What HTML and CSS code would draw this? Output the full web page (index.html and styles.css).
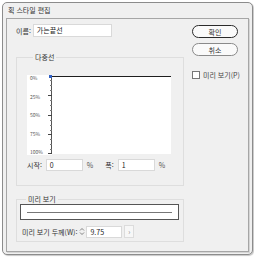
FILE: index.html
```html
<!DOCTYPE html>
<html lang="ko">
<head>
    <meta charset="utf-8">
    <title>획 스타일 편집</title>
    <link rel="stylesheet" href="styles.css">
</head>
<body>
    <div class="window">
        <div class="titlebar">획 스타일 편집</div>
        <div class="frame">
            <div class="main">
                <div class="name-row">
                    <span class="label">이름:</span>
                    <div class="field name-field">가는끝선</div>
                </div>

                <fieldset class="group lines">
                    <legend>다중선</legend>
                    <div class="chart">
                        <div class="scale">
                            <span>0%</span>
                            <span>25%</span>
                            <span>50%</span>
                            <span>75%</span>
                            <span>100%</span>
                        </div>
                        <svg class="ticks" width="5" height="80" viewBox="0 0 5 80">
                            <path d="M4.5 1V79" stroke="#555" stroke-width="1"/>
                            <path d="M1 20.5H5M1 40.5H5M1 59.5H5M1 78.5H5" stroke="#444" stroke-width="1"/>
                            <path d="M3 5.5H5M3 10.5H5M3 15.5H5M3 25.5H5M3 30.5H5M3 35.5H5M3 45.5H5M3 50.5H5M3 55.5H5M3 64.5H5M3 69.5H5M3 74.5H5" stroke="#777" stroke-width="1"/>
                            <rect x="2" y="0" width="3" height="3" fill="#2f5fc4"/>
                        </svg>
                        <div class="plot"></div>
                    </div>
                    <div class="range-row">
                        <span class="label">시작:</span>
                        <div class="field small-field">0</div>
                        <span class="unit">%</span>
                        <span class="label width-label">폭:</span>
                        <div class="field small-field">1</div>
                        <span class="unit">%</span>
                    </div>
                </fieldset>

                <fieldset class="group preview">
                    <legend>미리 보기</legend>
                    <div class="preview-box"><div class="preview-line"></div></div>
                    <div class="weight-row">
                        <span class="label">미리 보기 두께(W):</span>
                        <svg class="spin" width="6" height="9" viewBox="0 0 6 9">
                            <path d="M1 3.5L3 1.5L5 3.5M1 5.5L3 7.5L5 5.5" fill="none" stroke="#666" stroke-width="0.8"/>
                        </svg>
                        <div class="field weight-field">9.75</div>
                        <div class="step">›</div>
                    </div>
                </fieldset>
            </div>

            <div class="side">
                <button class="btn primary">확인</button>
                <button class="btn">취소</button>
                <label class="check"><span class="box"></span>미리 보기(P)</label>
            </div>
        </div>
    </div>
</body>
</html>
```

FILE: styles.css
```css
body {
    margin: 0;
    background: #ffffff;
    font-family: "Noto Sans CJK KR", "Noto Sans", sans-serif;
    font-size: 7px;
    color: #222;
}

.window {
    margin: 2px 1px 2px 2px;
    width: 251px;
    height: 253px;
    box-sizing: border-box;
    border: 1px solid #8c8c8c;
    border-radius: 5px;
    background: #f0f0f0;
    box-shadow: 1px 1px 1px #c8c8c8;
    display: flex;
    flex-direction: column;
}

.titlebar {
    height: 15px;
    line-height: 14px;
    padding-left: 5px;
    color: #333;
}

.frame {
    flex: 1;
    margin: 0 3px 2px 3px;
    border: 1px solid #a6a6a6;
    box-shadow: 1px 1px 0 #d6d6d6;
    display: flex;
}

.main {
    width: 168px;
    padding-left: 9px;
}

.label {
    color: #333;
}

.field {
    box-sizing: border-box;
    height: 13px;
    line-height: 11px;
    padding-left: 3px;
    background: #ffffff;
    border: 1px solid #d9d9d9;
    color: #222;
}

.name-row {
    display: flex;
    align-items: center;
    margin-top: 5px;
}

.name-field {
    width: 79px;
    margin-left: 2px;
}

.group {
    margin: 0;
    min-width: 0;
    border: 1px solid #dedede;
}

.group legend {
    margin-left: 6px;
    padding: 0 2px;
    line-height: 8px;
    color: #333;
}

.lines {
    margin-top: 16px;
    padding: 14px 0 14px 10px;
}

.chart {
    display: flex;
    height: 80px;
}

.scale {
    width: 17px;
    background: #ffffff;
    display: flex;
    flex-direction: column;
    justify-content: space-between;
    padding: 0 0 0 3px;
    font-size: 5px;
    line-height: 6px;
    color: #555;
}

.ticks {
    background: #ffffff;
}

.plot {
    width: 119px;
    margin-top: 1px;
    height: 78px;
    background: #ffffff;
    border-top: 1px solid #1e1e1e;
    box-sizing: border-box;
}

.range-row {
    display: flex;
    align-items: center;
    margin-top: 4px;
}

.small-field {
    width: 37px;
    height: 12px;
    margin-left: 4px;
}

.unit {
    margin-left: 4px;
    color: #555;
}

.width-label {
    margin-left: 12px;
}

.preview {
    margin-top: 9px;
    padding: 1px 4px 3px 3px;
}

.preview-box {
    height: 16px;
    box-sizing: border-box;
    background: #ffffff;
    border: 1px solid #555;
    display: flex;
    align-items: center;
    padding: 0 6px;
}

.preview-line {
    flex: 1;
    height: 1px;
    background: #777;
}

.weight-row {
    display: flex;
    align-items: center;
    margin-top: 5px;
    padding-left: 2px;
}

.spin {
    margin-left: 2px;
}

.weight-field {
    width: 36px;
    height: 12px;
    margin-left: 1px;
}

.step {
    width: 8px;
    height: 11px;
    margin-left: 2px;
    border: 1px solid #dcdcdc;
    background: #f7f7f7;
    text-align: center;
    line-height: 10px;
    color: #888;
}

.side {
    padding: 6px 0 0 8px;
    display: flex;
    flex-direction: column;
}

.btn {
    width: 46px;
    height: 13px;
    padding: 0;
    border: 1px solid #8a8a8a;
    border-radius: 7px;
    background: #fafafa;
    font-family: inherit;
    font-size: 7px;
    color: #333;
    margin-bottom: 5px;
}

.btn.primary {
    border: 1px solid #2b2b2b;
}

.check {
    display: flex;
    align-items: center;
    margin-top: 9px;
    color: #444;
}

.box {
    width: 6px;
    height: 6px;
    border: 1px solid #777;
    background: #ffffff;
    margin-right: 3px;
}
```
